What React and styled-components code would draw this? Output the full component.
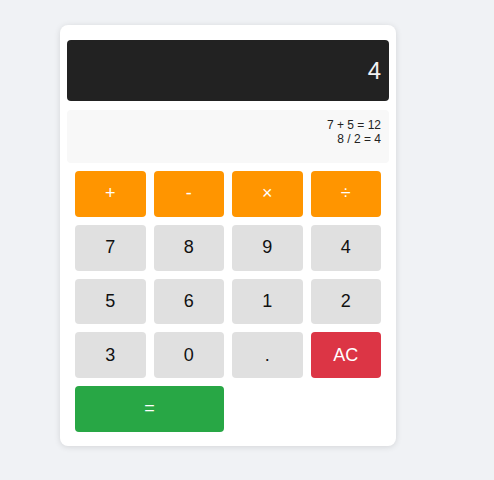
import React from 'react';
import styled, { createGlobalStyle } from 'styled-components';

const GlobalStyle = createGlobalStyle`
  html, body {
    margin: 0;
    padding: 0;
    background: #f0f2f5;
    font-family: "Liberation Sans", Arial, sans-serif;
  }
`;

const Page = styled.div`
  min-height: 480px;
  padding: 25px 0 0 60px;
  box-sizing: border-box;
`;

const Card = styled.div`
  width: 336px;
  box-sizing: border-box;
  background: #fff;
  border-radius: 8px;
  box-shadow: 0 1px 6px rgba(0,0,0,0.12);
  padding: 15px 7px 6px;
`;

const Display = styled.div`
  height: 61px;
  background: #222;
  color: #f2f2f2;
  border-radius: 4px;
  display: flex;
  align-items: center;
  justify-content: flex-end;
  padding: 0 8px;
  font-size: 24px;
`;

const History = styled.div`
  margin-top: 9px;
  height: 53px;
  box-sizing: border-box;
  background: #f8f8f8;
  border-radius: 4px;
  padding: 8px 8px 0;
  text-align: right;
  font-size: 12px;
  line-height: 14px;
  color: #222;
`;

const Keys = styled.div`
  display: grid;
  grid-template-columns: repeat(4, 1fr);
  grid-auto-rows: 45.75px;
  gap: 8px;
  padding: 8px;
`;

const colors = {
  op: ['#ff9500', '#fff'],
  num: ['#e0e0e0', '#111'],
  clear: ['#dc3545', '#fff'],
  equals: ['#28a745', '#fff'],
};

const Key = styled.button`
  border: none;
  border-radius: 4px;
  font-family: inherit;
  font-size: 18px;
  background: ${p => colors[p.$kind][0]};
  color: ${p => colors[p.$kind][1]};
  grid-column: span ${p => p.$span || 1};
  cursor: pointer;
`;

const keys = [
  ['+', 'op'], ['-', 'op'], ['×', 'op'], ['÷', 'op'],
  ['7', 'num'], ['8', 'num'], ['9', 'num'], ['4', 'num'],
  ['5', 'num'], ['6', 'num'], ['1', 'num'], ['2', 'num'],
  ['3', 'num'], ['0', 'num'], ['.', 'num'], ['AC', 'clear'],
];

export default function App() {
  return (
    <Page>
      <GlobalStyle />
      <Card>
        <Display>4</Display>
        <History>
          <div>7 + 5 = 12</div>
          <div>8 / 2 = 4</div>
        </History>
        <Keys>
          {keys.map(([label, kind]) => (
            <Key key={label} $kind={kind}>{label}</Key>
          ))}
          <Key $kind="equals" $span={2}>=</Key>
        </Keys>
      </Card>
    </Page>
  );
}
